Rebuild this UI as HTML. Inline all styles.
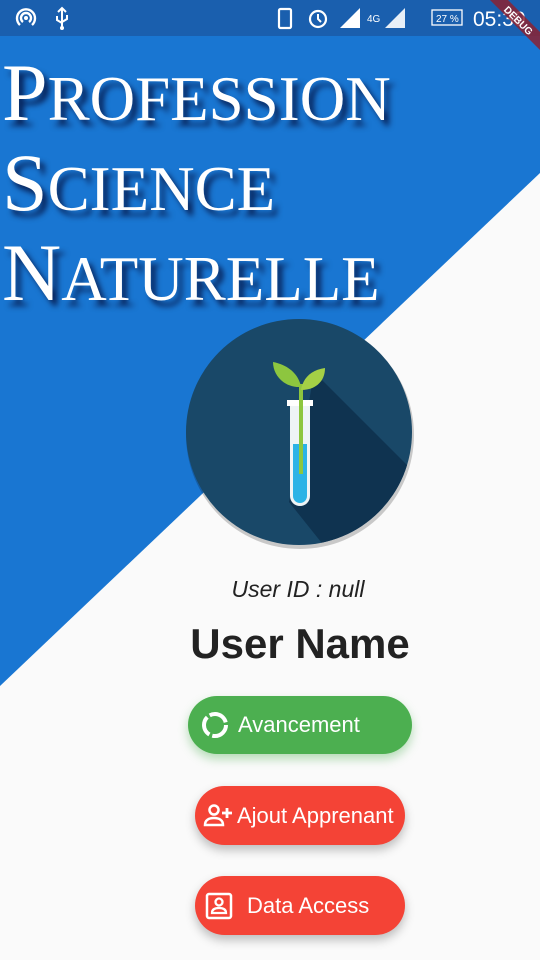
<!DOCTYPE html>
<html><head><meta charset="utf-8">
<style>
*{margin:0;padding:0;box-sizing:border-box}
body{width:540px;height:960px;overflow:hidden;background:#fafafa;font-family:"Liberation Sans",sans-serif;position:relative}
.bg{position:absolute;left:0;top:0}
.status{position:absolute;left:0;top:0;width:540px;height:36px;background:#1a5fae;color:#fff}
.title{position:absolute;left:2px;color:#fff;font-family:"Liberation Serif",serif;font-size:63px;line-height:90px;text-shadow:5px 6px 6px rgba(0,0,40,.7);letter-spacing:0;white-space:nowrap;text-transform:uppercase}
.title b{font-weight:normal;font-size:82px}
.btn{position:absolute;border-radius:30px;color:#fff;font-size:22px;display:flex;align-items:center}
</style></head><body>
<svg class="bg" width="540" height="960"><polygon points="0,0 540,0 540,173 0,686" fill="#1976d2"/></svg>
<div class="status">
<svg width="540" height="36" style="position:absolute;left:0;top:0">
<g fill="none" stroke="#fff" stroke-width="2.4"><path d="M20 25a9 9 0 1 1 12 0"/><path d="M23 22a5 5 0 1 1 6 0"/></g><circle cx="26" cy="18" r="2" fill="#fff"/>
<path d="M62 8v20M58 12l4-4 4 4M57 16v4l5 3M67 15v4l-5 3" stroke="#fff" stroke-width="2" fill="none"/><circle cx="62" cy="28" r="2" fill="#fff"/>
<rect x="279" y="9" width="12" height="19" rx="1.5" fill="none" stroke="#fff" stroke-width="2.2"/>
<circle cx="318" cy="19" r="8" fill="none" stroke="#fff" stroke-width="2.2"/><path d="M318 14v5l3 3" stroke="#fff" stroke-width="2" fill="none"/>
<polygon points="340,28 360,8 360,28" fill="#fff"/><text x="367" y="22" font-size="10" fill="#fff">4G</text>
<polygon points="385,28 405,8 405,28" fill="#fff" opacity=".9"/>
<rect x="432" y="10" width="30" height="15" fill="none" stroke="#fff" stroke-width="1.3"/><text x="436" y="22" font-size="10" fill="#fff">27 %</text>
<text x="473" y="26" font-size="21" fill="#fff">05:30</text>
</svg></div>
<svg width="80" height="80" style="position:absolute;right:0;top:0"><polygon points="30,0 48,0 80,32 80,50" fill="#8b2232" opacity=".85"/><text x="56" y="23" font-size="10" font-weight="bold" fill="#fff" transform="rotate(45 56 23)" text-anchor="middle">DEBUG</text></svg>
<div class="title" style="top:48px"><b>P</b>rofession</div>
<div class="title" style="top:138px"><b>S</b>cience</div>
<div class="title" style="top:228px"><b>N</b>aturelle</div>
<svg width="240" height="240" style="position:absolute;left:179px;top:312px">
<defs><clipPath id="c"><circle cx="120" cy="120" r="113"/></clipPath></defs>
<circle cx="121" cy="123" r="114" fill="rgba(0,0,0,.2)"/>
<circle cx="120" cy="120" r="113" fill="#194868"/>
<polygon clip-path="url(#c)" points="135,60 240,165 240,240 150,240 110,190 130,90" fill="#0f3350"/>
<rect x="108" y="88" width="26" height="6" fill="#fff"/>
<path d="M111 94v90a10 10 0 0 0 20 0v-90z" fill="#eef4f6"/>
<path d="M114 132v52a7 7 0 0 0 14 0v-52z" fill="#2bb3e6"/>
<rect x="120" y="72" width="4" height="90" fill="#8dc63f"/>
<path d="M122 75c-2-12-12-22-28-25 0 14 12 26 28 25z" fill="#8dc63f"/>
<path d="M122 78c2-12 10-20 24-22 0 14-10 22-24 22z" fill="#a4d046"/>
</svg>
<div style="position:absolute;left:0;width:596px;top:576px;text-align:center;font-style:italic;font-size:23px;color:#222">User ID : null</div>
<div style="position:absolute;left:0;width:600px;top:620px;text-align:center;font-weight:bold;font-size:42px;color:#222">User Name</div>
<div class="btn" style="left:188px;top:696px;width:224px;height:58px;background:#4caf50;box-shadow:0 5px 10px rgba(76,175,80,.4)">
<svg width="30" height="30" style="margin-left:12px;margin-right:8px" viewBox="0 0 30 30"><circle cx="15" cy="15" r="11" fill="none" stroke="#fff" stroke-width="4" stroke-dasharray="20 3"/></svg>Avancement</div>
<div class="btn" style="left:195px;top:786px;width:210px;height:59px;background:#f44336;box-shadow:0 5px 10px rgba(0,0,0,.25)">
<svg width="30" height="30" style="margin-left:8px;margin-right:4px" viewBox="0 0 30 30"><circle cx="11" cy="9" r="4.5" fill="none" stroke="#fff" stroke-width="2.5"/><path d="M2 24c0-5 4-7 9-7s9 2 9 7z" fill="none" stroke="#fff" stroke-width="2.5"/><path d="M24 7v10M19 12h10" stroke="#fff" stroke-width="2.8"/></svg>Ajout Apprenant</div>
<div class="btn" style="left:195px;top:876px;width:210px;height:59px;background:#f44336;box-shadow:0 5px 10px rgba(0,0,0,.25)">
<svg width="28" height="28" style="margin-left:10px;margin-right:14px" viewBox="0 0 28 28"><rect x="2" y="2" width="24" height="24" rx="2" fill="none" stroke="#fff" stroke-width="2.5"/><circle cx="14" cy="10" r="3.5" fill="none" stroke="#fff" stroke-width="2.3"/><path d="M7 21c0-4 3-5 7-5s7 1 7 5z" fill="none" stroke="#fff" stroke-width="2.3"/></svg>Data Access</div>
</body></html>
